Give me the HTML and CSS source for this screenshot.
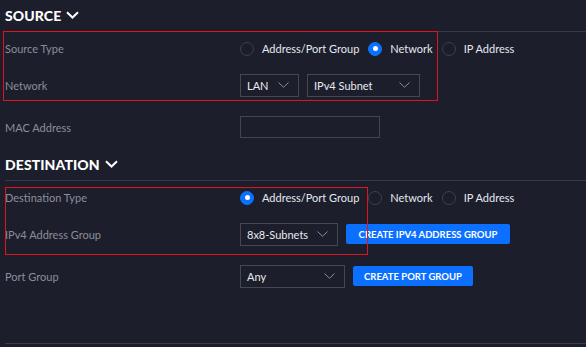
FILE: index.html
```html
<!DOCTYPE html>
<html lang="en">

<head>
    <meta charset="UTF-8">
    <title>Traffic Rule</title>
    <link rel="stylesheet" href="styles.css">
</head>

<body>
    <main class="rule">
        <!-- kilde -->
        <section class="blok">
            <h2 class="blok-titel">SOURCE
                <svg class="pil" width="13" height="8" viewBox="0 0 13 8"><path d="M1 1.2 L6.5 6.5 L12 1.2" fill="none" stroke="#fff" stroke-width="2"/></svg>
            </h2>
            <div class="linje"></div>
            <div class="markering markering-kilde"></div>

            <div class="felt felt-type">
                <p class="etiket">Source Type</p>
                <div class="valg">
                    <label class="radio"><span class="cirkel"></span>Address/Port Group</label>
                    <label class="radio"><span class="cirkel valgt"></span>Network</label>
                    <label class="radio"><span class="cirkel"></span>IP Address</label>
                </div>
            </div>

            <div class="felt felt-net">
                <p class="etiket">Network</p>
                <div class="valg">
                    <div class="select select-lan">LAN<svg class="ned" width="11" height="6" viewBox="0 0 11 6"><path d="M0.5 0.5 L5.5 5.3 L10.5 0.5" fill="none" stroke="#8a8d99" stroke-width="1"/></svg></div>
                    <div class="select select-subnet">IPv4 Subnet<svg class="ned" width="11" height="6" viewBox="0 0 11 6"><path d="M0.5 0.5 L5.5 5.3 L10.5 0.5" fill="none" stroke="#8a8d99" stroke-width="1"/></svg></div>
                </div>
            </div>

            <div class="felt felt-mac">
                <p class="etiket">MAC Address</p>
                <div class="valg">
                    <div class="input"></div>
                </div>
            </div>
        </section>

        <!-- destination -->
        <section class="blok">
            <h2 class="blok-titel">DESTINATION
                <svg class="pil" width="13" height="8" viewBox="0 0 13 8"><path d="M1 1.2 L6.5 6.5 L12 1.2" fill="none" stroke="#fff" stroke-width="2"/></svg>
            </h2>
            <div class="linje"></div>
            <div class="markering markering-dest"></div>

            <div class="felt felt-type">
                <p class="etiket">Destination Type</p>
                <div class="valg">
                    <label class="radio"><span class="cirkel valgt"></span>Address/Port Group</label>
                    <label class="radio"><span class="cirkel"></span>Network</label>
                    <label class="radio"><span class="cirkel"></span>IP Address</label>
                </div>
            </div>

            <div class="felt felt-gruppe">
                <p class="etiket">IPv4 Address Group</p>
                <div class="valg">
                    <div class="select select-gruppe">8x8-Subnets<svg class="ned" width="11" height="6" viewBox="0 0 11 6"><path d="M0.5 0.5 L5.5 5.3 L10.5 0.5" fill="none" stroke="#8a8d99" stroke-width="1"/></svg></div>
                    <button class="knap knap-ipv4">CREATE IPV4 ADDRESS GROUP</button>
                </div>
            </div>

            <div class="felt felt-port">
                <p class="etiket">Port Group</p>
                <div class="valg">
                    <div class="select select-any">Any<svg class="ned" width="11" height="6" viewBox="0 0 11 6"><path d="M0.5 0.5 L5.5 5.3 L10.5 0.5" fill="none" stroke="#8a8d99" stroke-width="1"/></svg></div>
                    <button class="knap knap-port">CREATE PORT GROUP</button>
                </div>
            </div>
        </section>

        <div class="bund-linje"></div>
    </main>
</body></html>
```

FILE: styles.css
```css
* {
    box-sizing: border-box;
    padding: 0;
    margin: 0;
}

body {
    background-color: #1c1e2c;
    font-family: Lato, "Open Sans", sans-serif;
    color: #e4e6ec;
    overflow: hidden;
}

.rule {
    padding-left: 5px;
    height: 347px;
}

.blok {
    position: relative;
}

.blok-titel {
    display: flex;
    align-items: center;
    gap: 5px;
    height: 31px;
    font-size: 14px;
    font-weight: 900;
    color: #ffffff;
    letter-spacing: 0.1px;
}

.pil {
    margin-top: -2px;
}

.linje {
    height: 1px;
    background-color: #363947;
}

.felt {
    display: flex;
    align-items: center;
}

.felt-type {
    height: 33px;
}

.felt-net {
    height: 40px;
}

.felt-mac {
    height: 44px;
}

.felt-gruppe {
    height: 40px;
}

.felt-port {
    height: 44px;
}

.etiket {
    width: 235px;
    flex-shrink: 0;
    font-size: 11px;
    color: #8b8e9a;
}

.valg {
    display: flex;
    align-items: center;
    gap: 8px;
}

.radio {
    display: flex;
    align-items: center;
    gap: 8px;
    font-size: 11px;
    color: #e6e8ee;
    margin-right: 1px;
}

.cirkel {
    width: 14px;
    height: 14px;
    border-radius: 50%;
    border: 1px solid #3d404d;
    display: flex;
    align-items: center;
    justify-content: center;
}

.cirkel.valgt {
    background-color: #0b72ff;
    border-color: #0b72ff;
}

.cirkel.valgt::after {
    content: "";
    width: 5px;
    height: 5px;
    border-radius: 50%;
    background-color: #ffffff;
}

.select {
    display: flex;
    align-items: center;
    justify-content: space-between;
    height: 23px;
    padding: 0 9px 0 6px;
    border: 1px solid #454853;
    font-size: 11px;
    color: #e8eaef;
}

.select-lan {
    width: 59px;
}

.select-subnet {
    width: 113px;
}

.select-gruppe {
    width: 98px;
}

.select-any {
    width: 105px;
}

.input {
    width: 140px;
    height: 22px;
    border: 1px solid #3e474c;
}

.knap {
    height: 20px;
    border: none;
    border-radius: 2px;
    background-color: #0b6fff;
    color: #ffffff;
    font-family: Lato, "Open Sans", sans-serif;
    font-size: 9.5px;
    font-weight: 700;
    padding: 0;
    white-space: nowrap;
}

.knap-ipv4 {
    width: 164px;
}

.knap-port {
    width: 120px;
}

/* røde markeringer ligger oven på indholdet */
.markering {
    position: absolute;
    border: 1px solid #e0141e;
    pointer-events: none;
}

.markering-kilde {
    left: -2px;
    top: 31px;
    width: 435px;
    height: 70px;
}

.markering-dest {
    left: 0;
    top: 38px;
    width: 363px;
    height: 68px;
}

.bund-linje {
    margin-top: 45px;
    height: 1px;
    background-color: #3a3d4b;
}
```
